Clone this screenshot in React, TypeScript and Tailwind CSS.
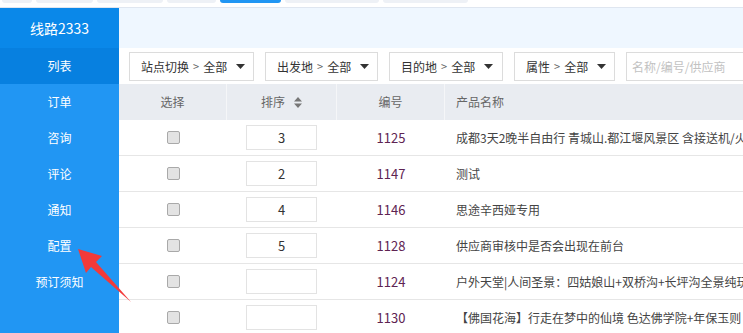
import React from 'react';

const menu = ['订单', '咨询', '评论', '通知', '配置', '预订须知'];

const filters = [
  { label: '站点切换', w: 'w-[125px]' },
  { label: '出发地', w: 'w-[113px]' },
  { label: '目的地', w: 'w-[114px]' },
  { label: '属性', w: 'w-[101px]' },
];

const rows = [
  { sort: '3', id: '1125', name: '成都3天2晚半自由行 青城山.都江堰风景区 含接送机/火车站' },
  { sort: '2', id: '1147', name: '测试' },
  { sort: '4', id: '1146', name: '思途辛西娅专用' },
  { sort: '5', id: '1128', name: '供应商审核中是否会出现在前台' },
  { sort: '', id: '1124', name: '户外天堂|人间圣景：四姑娘山+双桥沟+长坪沟全景纯玩' },
  { sort: '', id: '1130', name: '【佛国花海】行走在梦中的仙境 色达佛学院+年保玉则' },
];

const tabs = [
  'w-[30px]', 'w-[57px]', 'w-[66px]', 'w-[49px]', 'w-[61px]', 'w-[94px]', 'w-[85px]',
];

export default function App() {
  return (
    <div
      className="relative w-[743px] h-[333px] overflow-hidden bg-white text-[12px]"
      style={{ fontFamily: '"Noto Sans CJK SC", "Noto Sans", sans-serif' }}
    >
      {/* top tab strip */}
      <div className="h-[8px] flex gap-[4px] pl-[2px] border-b border-[#dfe6f0] bg-white">
        {tabs.map((w, i) => (
          <div
            key={i}
            className={`${w} h-[3px] rounded-b-[4px] ${i === 4 ? 'bg-[#2196f3]' : 'bg-[#eef1f6]'}`}
          />
        ))}
      </div>

      <div className="flex h-[325px]">
        {/* sidebar */}
        <aside className="w-[119px] shrink-0 bg-[#2196f3] text-white">
          <div className="h-[40px] bg-[#0a88e9] flex items-center justify-center text-[14px]">线路2333</div>
          <div className="h-[36px] bg-[#0780e0] flex items-center justify-center">列表</div>
          {menu.map((m) => (
            <div key={m} className="h-[36px] flex items-center justify-center">{m}</div>
          ))}
        </aside>

        {/* main */}
        <main className="flex-1 min-w-0">
          <div className="h-[40px] bg-[#eff7ff]" />
          <div className="h-[36px] flex items-start gap-[11px] pl-[10px] pt-[4px]">
            {filters.map((f) => (
              <div
                key={f.label}
                className={`${f.w} shrink-0 h-[29px] border border-[#dcdcdc] flex items-center pl-[11px] text-[#333]`}
              >
                <span>{f.label}</span>
                <span className="mx-[4px] text-[#666] text-[11px]">&gt;</span>
                <span>全部</span>
                <svg width="9" height="5" viewBox="0 0 9 5" className="ml-[9px]">
                  <path d="M0 0h9L4.5 5z" fill="#333" />
                </svg>
              </div>
            ))}
            <div className="flex-1 min-w-0 h-[29px] border border-[#dcdcdc] border-r-0 flex items-center pl-[5px] text-[#c2c2c2] whitespace-nowrap">
              名称/编号/供应商
            </div>
          </div>

          {/* table */}
          <div className="h-[36px] bg-[#e9ecf1] flex text-[#666]">
            <div className="w-[108px] flex items-center justify-center border-r border-[#f5f6f8]">选择</div>
            <div className="w-[110px] flex items-center justify-center border-r border-[#f5f6f8]">
              <span>排序</span>
              <svg width="8" height="11" viewBox="0 0 8 11" className="ml-[9px]">
                <path d="M0 4.5L4 0l4 4.5zM0 6.5h8L4 11z" fill="#777" />
              </svg>
            </div>
            <div className="w-[108px] flex items-center justify-center border-r border-[#f5f6f8]">编号</div>
            <div className="flex-1 flex items-center pl-[11px]">产品名称</div>
          </div>
          {rows.map((r) => (
            <div key={r.id} className="h-[36px] flex border-b border-[#e6e6e6]">
              <div className="w-[108px] flex items-center justify-center">
                <div className="w-[13px] h-[13px] rounded-[2px] border border-[#a9a9a9] bg-[#e3e3e3]" />
              </div>
              <div className="w-[110px] flex items-center pl-[19px]">
                <div className="w-[71px] h-[25px] border border-[#e3e3e3] flex items-center justify-center text-[13px] text-[#333]">
                  {r.sort}
                </div>
              </div>
              <div className="w-[108px] flex items-center justify-center text-[13px] text-[#5e2352]">{r.id}</div>
              <div className="flex-1 min-w-0 flex items-center pl-[11px] text-[#444] whitespace-nowrap overflow-hidden">
                {r.name}
              </div>
            </div>
          ))}
        </main>
      </div>

      {/* annotation arrow */}
      <svg className="absolute left-0 top-0 pointer-events-none" width="743" height="333">
        <path d="M78 249 L102 256 L96 262 L131 302 L91 267 L86 273 Z" fill="#f23a3a" />
      </svg>
    </div>
  );
}
